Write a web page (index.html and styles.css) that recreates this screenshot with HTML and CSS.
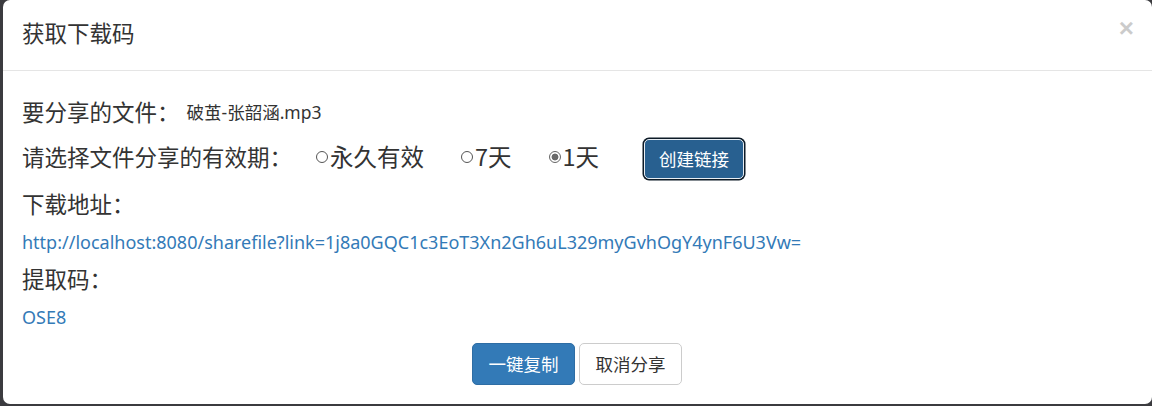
FILE: index.html
```html
<!DOCTYPE html>
<html lang="zh-CN">
<head>
<meta charset="utf-8">
<title>获取下载码</title>
<link rel="stylesheet" href="styles.css">
</head>
<body>
<div class="modal">
  <div class="modal-header">
    <h4 class="modal-title">获取下载码</h4>
    <span class="close">×</span>
  </div>
  <div class="modal-body">
    <div class="row row-file">
      <span class="label">要分享的文件：</span>
      <span class="filename">破茧-张韶涵.mp3</span>
    </div>
    <div class="row row-period">
      <span class="label">请选择文件分享的有效期：</span>
      <div class="options">
        <label class="opt"><span class="radio"></span>永久有效</label>
        <label class="opt"><span class="radio"></span>7天</label>
        <label class="opt"><span class="radio checked"></span>1天</label>
      </div>
      <button class="btn btn-create">创建链接</button>
    </div>
    <div class="row row-addr-label"><span class="label">下载地址：</span></div>
    <div class="row row-link"><a class="link" href="#">http://localhost:8080/sharefile?link=1j8a0GQC1c3EoT3Xn2Gh6uL329myGvhOgY4ynF6U3Vw=</a></div>
    <div class="row row-code-label"><span class="label">提取码：</span></div>
    <div class="row row-code"><a class="link" href="#">OSE8</a></div>
    <div class="actions">
      <button class="btn btn-primary">一键复制</button>
      <button class="btn btn-default">取消分享</button>
    </div>
  </div>
</div>
</body>
</html>
```

FILE: styles.css
```css
html, body {
  margin: 0;
  padding: 0;
  height: 406px;
  overflow: hidden;
  background: #3b3b3f;
}
body {
  font-family: "Noto Sans", "Noto Sans CJK SC", sans-serif;
  color: #333;
}
.modal {
  box-sizing: border-box;
  margin-left: 3px;
  width: 1149px;
  height: 404px;
  background: #fff;
  border-radius: 7px;
  overflow: hidden;
}
.modal-header {
  display: flex;
  align-items: center;
  justify-content: space-between;
  height: 70px;
  padding: 0 19px;
  border-bottom: 1px solid #e5e5e5;
}
.modal-title {
  margin: 0;
  font-family: "Noto Sans CJK SC", sans-serif;
  font-weight: 400;
  font-size: 22.5px;
  line-height: 32px;
  padding-bottom: 6px;
  color: #333;
}
.close {
  font-family: "Liberation Sans", sans-serif;
  font-size: 26px;
  font-weight: 700;
  color: #000;
  opacity: 0.2;
  line-height: 1;
  margin-top: -14px;
  margin-right: -1px;
}
.modal-body {
  padding: 20px 19px 0;
}
.row {
  display: flex;
  align-items: center;
}
.label {
  font-family: "Noto Sans CJK SC", sans-serif;
  font-size: 22.5px;
  line-height: 32px;
  padding-bottom: 5px;
  color: #333;
}
.row-file { height: 44px; }
.filename {
  margin-left: 7px;
  padding-bottom: 3px;
  font-size: 17.5px;
  color: #333;
  font-family: "Noto Sans", "Noto Sans CJK SC", sans-serif;
}
.row-period { height: 46px; }
.options {
  display: flex;
  margin-left: 24px;
  gap: 37px;
}
.opt {
  display: flex;
  align-items: center;
  font-family: "Noto Sans CJK SC", sans-serif;
  font-size: 23.5px;
  line-height: 32px;
  padding-bottom: 5px;
  color: #333;
}
.radio {
  box-sizing: border-box;
  width: 12px;
  height: 12px;
  border: 1px solid #555;
  border-radius: 50%;
  margin-right: 2px;
  margin-top: 2px;
  background: #fff;
}
.radio.checked {
  border-color: #666;
  background: radial-gradient(circle, #6a6a6a 0 3.2px, #fff 3.7px);
}
.btn {
  box-sizing: border-box;
  font-family: "Noto Sans CJK SC", sans-serif;
  font-size: 17.5px;
  line-height: 24px;
  padding: 0 8px;
  border-radius: 5px;
  white-space: nowrap;
  cursor: pointer;
}
.btn-create {
  margin-left: 45px;
  width: 100px;
  height: 40px;
  margin-top: 2px;
  background: #286090;
  color: #fff;
  border: 1px solid #e8eef4;
  box-shadow: 0 0 0 1.5px #0d1a26;
}
.row-addr-label { height: 48px; }
.row-link { height: 26px; }
.link {
  font-family: "Noto Sans", sans-serif;
  font-size: 18px;
  color: #337ab7;
  text-decoration: none;
}
.row-code-label { height: 50px; }
.row-code { height: 24px; }
.actions {
  display: flex;
  justify-content: center;
  gap: 4px;
  margin-top: 14px;
  padding-right: 1px;
}
.btn-primary {
  width: 103px;
  height: 42px;
  background: #337ab7;
  border: 1px solid #2e6da4;
  color: #fff;
}
.btn-default {
  width: 103px;
  height: 42px;
  background: #fff;
  border: 1px solid #ccc;
  color: #333;
}
```
